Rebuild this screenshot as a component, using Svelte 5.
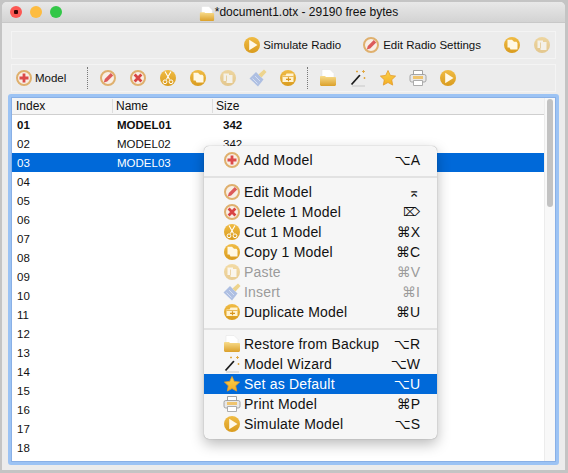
<script>
  const rows = Array.from({ length: 18 }, (_, i) => {
    const index = String(i + 1).padStart(2, '0');
    if (i < 3) return { index, name: 'MODEL' + index, size: i < 2 ? '342' : '' };
    return { index, name: '', size: '' };
  });

  const modelTools = ['edit', 'del', 'cut', 'copy', 'paste', 'brush', 'dup'];
  const fileTools = ['folder', 'wand', 'star', 'print', 'play'];

  const menu = [
    [{ icon: 'add', label: 'Add Model', key: '⌥A' }],
    [
      { icon: 'edit', label: 'Edit Model', key: '⌅' },
      { icon: 'del', label: 'Delete 1 Model', key: '⌦', small: true },
      { icon: 'cut', label: 'Cut 1 Model', key: '⌘X' },
      { icon: 'copy', label: 'Copy 1 Model', key: '⌘C' },
      { icon: 'paste', label: 'Paste', key: '⌘V', off: true },
      { icon: 'brush', label: 'Insert', key: '⌘I', off: true },
      { icon: 'dup', label: 'Duplicate Model', key: '⌘U' }
    ],
    [
      { icon: 'folder', label: 'Restore from Backup', key: '⌥R' },
      { icon: 'wand', label: 'Model Wizard', key: '⌥W' },
      { icon: 'star', label: 'Set as Default', key: '⌥U', hot: true },
      { icon: 'print', label: 'Print Model', key: '⌘P' },
      { icon: 'play', label: 'Simulate Model', key: '⌥S' }
    ]
  ];
</script>

{#snippet ico(name)}
  <svg class="ico" viewBox="0 0 18 18"><use href="#i-{name}" /></svg>
{/snippet}

<svg class="defs" width="0" height="0" aria-hidden="true">
  <defs>
    <linearGradient id="gold" x1="0" y1="0" x2="0" y2="1">
      <stop offset="0" stop-color="#f0bc45" />
      <stop offset="1" stop-color="#d99b1e" />
    </linearGradient>
    <linearGradient id="folderFill" x1="0" y1="0" x2="0" y2="1">
      <stop offset="0" stop-color="#f8dc8c" />
      <stop offset="1" stop-color="#dba02a" />
    </linearGradient>
    <linearGradient id="starFill" x1="0" y1="0" x2="0" y2="1">
      <stop offset="0" stop-color="#fbd34e" />
      <stop offset="1" stop-color="#f3ae24" />
    </linearGradient>
    <symbol id="i-add" viewBox="0 0 18 18">
      <circle cx="9" cy="9" r="7" fill="#f8efe6" stroke="#dfb06e" stroke-width="2" />
      <path d="M9 4.500v9M4.500 9h9" stroke="#dc4a4a" stroke-width="2.800" />
    </symbol>
    <symbol id="i-edit" viewBox="0 0 18 18">
      <circle cx="9" cy="9" r="7" fill="#f8efe6" stroke="#dfb06e" stroke-width="2" />
      <path d="M4.800 13.400l1-3.400 6-6 2.400 2.400-6 6z" fill="#dc5a5a" />
    </symbol>
    <symbol id="i-del" viewBox="0 0 18 18">
      <circle cx="9" cy="9" r="7" fill="#f8efe6" stroke="#dfb06e" stroke-width="2" />
      <path d="M5.600 5.600l6.800 6.800M12.400 5.600l-6.800 6.800" stroke="#d84444" stroke-width="2.800" />
    </symbol>
    <symbol id="i-cut" viewBox="0 0 18 18">
      <circle cx="9" cy="9" r="8" fill="url(#gold)" />
      <path d="M6 2.500l4.600 8M12 2.500l-4.600 8" stroke="#fff" stroke-width="1.100" fill="none" />
      <circle cx="6" cy="12.800" r="1.900" fill="none" stroke="#fff" stroke-width="1" />
      <circle cx="12" cy="12.800" r="1.900" fill="none" stroke="#fff" stroke-width="1" />
    </symbol>
    <symbol id="i-copy" viewBox="0 0 18 18">
      <circle cx="9" cy="9" r="8" fill="url(#gold)" />
      <path d="M4.500 3.800h4.500l2 2h2.500l1 1.500v6.200h-7l-1-2h-2z" fill="#fff8e4" />
    </symbol>
    <symbol id="i-paste" viewBox="0 0 18 18">
      <g opacity=".45">
        <circle cx="9" cy="9" r="8" fill="url(#gold)" />
        <path d="M4.500 4.500h5.500v1.500h3.500v8h-6v-2h-3z" fill="#fff8e4" />
        <path d="M7.500 6.500v5.500" stroke="#e0b050" stroke-width="1" />
      </g>
    </symbol>
    <symbol id="i-brush" viewBox="0 0 18 18">
      <path d="M.5 9.500l6.500-6.500 7.500 7.500-5.500 7z" fill="#aebfe2" />
      <path d="M3.500 9.500l5 5M6 7l5 5" stroke="#d4def2" stroke-width="1" />
      <path d="M9.500 5.500l5.500-5 2.500 2.500-5 5.500z" fill="#edd48e" />
    </symbol>
    <symbol id="i-dup" viewBox="0 0 18 18">
      <circle cx="9" cy="9" r="8" fill="url(#gold)" />
      <path d="M3.500 6.500v6.500h11v-8.500h-7l-1 2z" fill="#fff3d2" />
      <path d="M3.500 7.500h11" stroke="#dfa128" stroke-width=".7" />
      <path d="M7 10.300h5M9.500 8.300v4" stroke="#d8951c" stroke-width="1.200" />
    </symbol>
    <symbol id="i-folder" viewBox="0 0 18 18">
      <path d="M3 .5h8l4 4v5h-12z" fill="#fff" stroke="#e0e0e0" stroke-width=".5" />
      <path d="M1 8c0-.6.5-1 1-1h4l1 1h9c.6 0 1 .4 1 1v6.500c0 .8-.6 1.500-1.500 1.500h-13c-.8 0-1.500-.7-1.500-1.500z" fill="url(#folderFill)" />
    </symbol>
    <symbol id="i-wand" viewBox="0 0 18 18">
      <path d="M2.500 15.500l8.500-9.500" stroke="#1c1c1c" stroke-width="1.800" />
      <path d="M11 6l2-2.200" stroke="#f4f4f4" stroke-width="1.800" />
      <path d="M3 17h13" stroke="#c8c8c8" stroke-width="1" />
      <path d="M14.500 1v3M13 2.500h3M15.500 8v2M14.500 9h2M8 1.500v2M7 2.500h2" stroke="#e0a53a" stroke-width=".9" />
    </symbol>
    <symbol id="i-star" viewBox="0 0 18 18">
      <path d="M9 1.500l2.300 4.900 5.300.7-3.900 3.700 1 5.300-4.700-2.600-4.700 2.600 1-5.300-3.900-3.700 5.300-.7z" fill="url(#starFill)" stroke="#e39a2a" stroke-width=".8" stroke-linejoin="round" />
    </symbol>
    <symbol id="i-print" viewBox="0 0 18 18">
      <path d="M4.500 1.500h9v5h-9z" fill="#fff" stroke="#999" stroke-width=".9" />
      <rect x="1" y="5.500" width="16" height="7.500" rx="1.800" fill="#e8e8e8" stroke="#9c9c9c" stroke-width=".9" />
      <rect x="4" y="7" width="10" height="3" fill="#efc46e" />
      <path d="M4.500 11.500h9v5h-9z" fill="#fff" stroke="#a4a4a4" stroke-width=".9" />
    </symbol>
    <symbol id="i-play" viewBox="0 0 18 18">
      <circle cx="9" cy="9" r="8" fill="url(#gold)" />
      <path d="M6.200 3.800l8.300 5.200-8.300 5.200z" fill="#fff9ea" />
    </symbol>
  </defs>
</svg>

<div class="window">
  <header class="titlebar">
    <span class="title-ico">{@render ico('folder')}</span>
    <span class="title">*document1.otx - 29190 free bytes</span>
    <div class="lights">
      <i class="light red"></i>
      <i class="light yellow"></i>
      <i class="light green"></i>
    </div>
  </header>

  <div class="content">
    <div class="toolbar top">
      <button class="tool wide">{@render ico('play')}<span>Simulate Radio</span></button>
      <button class="tool wide">{@render ico('edit')}<span>Edit Radio Settings</span></button>
      <button class="tool">{@render ico('copy')}</button>
      <button class="tool">{@render ico('paste')}</button>
    </div>

    <div class="toolbar bottom">
      <button class="tool add">{@render ico('add')}<span>Model</span></button>
      <i class="sep"></i>
      {#each modelTools as name}
        <button class="tool">{@render ico(name)}</button>
      {/each}
      <i class="sep second"></i>
      {#each fileTools as name}
        <button class="tool">{@render ico(name)}</button>
      {/each}
    </div>

    <div class="tablewrap">
      <div class="table">
        <div class="thead">
          <span class="c-index">Index</span>
          <span class="c-name">Name</span>
          <span class="c-size">Size</span>
        </div>
        {#each rows as row, i}
          <div class="row" class:bold={i === 0} class:selected={i === 2}>
            <span class="c-index">{row.index}</span>
            <span class="c-name">{row.name}</span>
            <span class="c-size">{row.size}</span>
          </div>
        {/each}
      </div>
      <div class="scrollbar"><i class="thumb"></i></div>
    </div>
  </div>

  <div class="menu">
    {#each menu as group, g}
      {#if g > 0}<hr />{/if}
      {#each group as item}
        <div class="item" class:off={item.off} class:hot={item.hot}>
          {@render ico(item.icon)}
          <span class="label">{item.label}</span>
          <span class="key" class:small={item.small}>{item.key}</span>
        </div>
      {/each}
    {/each}
  </div>
</div>

<style>
  :global(body) {
    margin: 0;
    background: #c4c4c4;
  }

  .defs {
    display: block;
  }

  .window {
    position: relative;
    box-sizing: border-box;
    width: 563px;
    height: 468px;
    margin: 2px 0 0 2px;
    background: #ececec;
    border-radius: 5px 5px 0 0;
    overflow: hidden;
    font-family: "Liberation Sans", Arial, sans-serif;
    color: #111;
  }

  .ico {
    display: block;
    flex: none;
    width: 18px;
    height: 18px;
  }

  .titlebar {
    position: relative;
    display: flex;
    justify-content: center;
    align-items: center;
    box-sizing: border-box;
    height: 21px;
    padding-left: 30px;
    background: linear-gradient(#e8e8e8, #d3d3d3);
    border-bottom: 1px solid #c8c8c8;
    font-size: 12px;
  }

  .title-ico .ico {
    width: 16px;
    height: 16px;
    margin-top: 3px;
  }

  .lights {
    position: absolute;
    left: 8px;
    top: 4px;
    display: flex;
    gap: 8px;
  }

  .light {
    width: 12px;
    height: 12px;
    border-radius: 50%;
  }

  .red {
    background: radial-gradient(circle, #3a0505 0 2px, #fc5753 2.5px);
  }

  .yellow {
    background: #fdbc40;
  }

  .green {
    background: #33c748;
  }

  .content {
    display: flex;
    flex-direction: column;
    padding: 8px 6px 0 6px;
  }

  .toolbar {
    display: flex;
    align-items: center;
    box-sizing: border-box;
    height: 28px;
    margin: 0 3px;
    border: 1px solid #f4f4f4;
    font-size: 11.500px;
  }

  .top {
    justify-content: flex-end;
    gap: 12px;
    padding-right: 4px;
    margin-bottom: 5px;
  }

  .top .tool {
    padding: 0;
  }

  .top .wide {
    margin-right: 9px;
  }

  .top .wide:first-child {
    gap: 2px;
  }

  .top .wide + .wide {
    margin-right: 10px;
  }

  .tool {
    display: flex;
    align-items: center;
    gap: 3px;
    padding: 0 6px;
    border: 0;
    background: none;
    font: inherit;
    color: inherit;
  }

  .add {
    gap: 2px;
    padding: 0 0 0 3px;
    margin-right: 16px;
  }

  .sep {
    height: 22px;
    margin: 0 5px;
    border-left: 1px dotted #777;
  }

  .second {
    margin-left: 4px;
  }

  .tablewrap {
    display: flex;
    box-sizing: border-box;
    height: 371px;
    margin-top: 2px;
    border: 3px solid #9cc3f4;
    border-radius: 3px;
    box-shadow: inset 0 0 0 1px #89b0e6;
    background: #fff;
    overflow: hidden;
  }

  .table {
    flex: 1;
    min-width: 0;
    margin: 1px 0 0 1px;
    font-size: 11.500px;
  }

  .thead {
    display: flex;
    align-items: center;
    height: 17px;
    background: #f5f5f5;
    border-bottom: 1px solid #cfcfcf;
    box-sizing: border-box;
    font-size: 12px;
  }

  .thead span + span {
    border-left: 1px solid #ddd;
  }

  .thead span {
    box-sizing: border-box;
    padding-left: 4px;
    height: 14px;
    line-height: 14px;
  }

  .thead span + span {
    padding-left: 3px;
  }

  .row {
    display: flex;
    align-items: center;
    height: 19px;
  }

  .row .c-index {
    padding-left: 5px;
    box-sizing: border-box;
  }

  .row .c-name {
    padding-left: 5px;
    box-sizing: border-box;
  }

  .row .c-size {
    padding-left: 11px;
  }

  .c-index,
  .c-name {
    width: 100px;
  }

  .bold {
    font-weight: bold;
  }

  .selected {
    background: #0069d9;
    color: #fff;
  }

  .scrollbar {
    box-sizing: border-box;
    width: 11px;
    margin: 1px 1px 1px 0;
    padding: 1px 2px;
    background: #f8f8f8;
    border-left: 1px solid #ececec;
  }

  .thumb {
    display: block;
    height: 108px;
    background: #c2c2c2;
    border-radius: 3px;
  }

  .menu {
    position: absolute;
    left: 202px;
    top: 144px;
    box-sizing: border-box;
    width: 233px;
    padding: 4px 0 5px;
    background: #f6f6f6;
    border-radius: 5px;
    box-shadow: 0 0 1px rgba(0, 0, 0, 0.45), 0 5px 14px rgba(0, 0, 0, 0.28);
    font-size: 14px;
  }

  .menu hr {
    height: 2px;
    margin: 6px 0 4px;
    border: 0;
    background: #e2e2e2;
  }

  .item {
    display: flex;
    align-items: center;
    gap: 3px;
    height: 20px;
    padding: 0 17px 0 19px;
  }

  .label {
    flex: 1;
    letter-spacing: 0.2px;
  }

  .key {
    white-space: nowrap;
    font-family: "Liberation Sans", "DejaVu Sans", sans-serif;
    font-size: 14px;
  }

  .key.small {
    font-size: 12px;
  }

  .off {
    color: #9b9b9b;
  }

  .hot {
    background: #0069d9;
    color: #fff;
  }
</style>
